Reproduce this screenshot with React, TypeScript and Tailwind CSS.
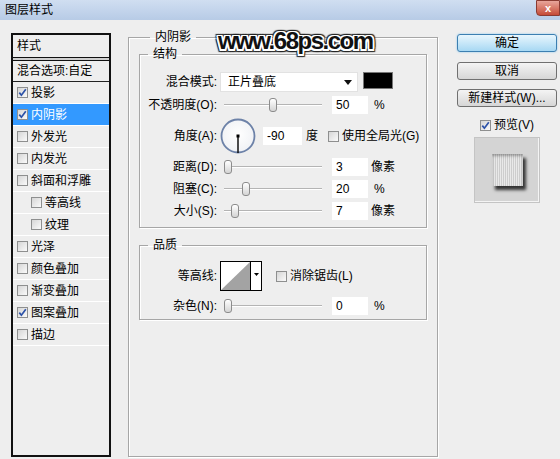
import React from 'react';

const font = "font-['Liberation_Sans','Noto_Sans_CJK_SC',sans-serif]";

const Check = ({ on }: { on?: boolean }) => (
    <span className="inline-flex w-[11px] h-[11px] shrink-0 items-center justify-center border border-[#8e8f8f] bg-gradient-to-br from-[#d6d6d6] to-[#fafafa]">
        {on && (
            <svg width="9" height="9" viewBox="0 0 9 9">
                <path d="M1.3 4.6 L3.4 7.2 L7.8 1.2" fill="none" stroke="#2c52a8" strokeWidth="1.7" />
            </svg>
        )}
    </span>
);

const Slider = ({ pct }: { pct: number }) => (
    <div className="relative w-[98px] h-[18px] shrink-0">
        <div className="absolute left-0 right-0 top-[8px] h-[2px] border-t border-[#b4b4b4] border-b border-b-white" />
        <div
            className="absolute top-[2px] w-[8px] h-[14px] rounded-[3px] border border-[#8c8c8c] bg-gradient-to-b from-white to-[#d4d4d4]"
            style={{ left: `${Math.round(pct * 0.9)}px` }}
        />
    </div>
);

const Field = ({ value, w = 'w-[36px]' }: { value: string; w?: string }) => (
    <div className={`${w} h-[18px] shrink-0 bg-white pl-[4px] leading-[18px]`}>{value}</div>
);

const Label = ({ children }: { children: React.ReactNode }) => (
    <div className="w-[77px] shrink-0 text-right">{children}</div>
);

const SliderRow = ({ label, pct, value, unit }: { label: string; pct: number; value: string; unit: string }) => (
    <div className="mt-[4px] h-[18px] flex items-center">
        <Label>{label}</Label>
        <div className="ml-[7px]">
            <Slider pct={pct} />
        </div>
        <div className="ml-[10px]">
            <Field value={value} />
        </div>
        <div className={unit === '%' ? 'ml-[6px]' : 'ml-[3px]'}>{unit}</div>
    </div>
);

const items: { name: string; on?: boolean; sub?: boolean; active?: boolean }[] = [
    { name: '投影', on: true },
    { name: '内阴影', on: true, active: true },
    { name: '外发光' },
    { name: '内发光' },
    { name: '斜面和浮雕' },
    { name: '等高线', sub: true },
    { name: '纹理', sub: true },
    { name: '光泽' },
    { name: '颜色叠加' },
    { name: '渐变叠加' },
    { name: '图案叠加', on: true },
    { name: '描边' },
];

export default function App() {
    return (
        <div className={`relative w-[560px] h-[459px] overflow-hidden bg-[#eeeeee] text-[12px] text-black ${font}`}>
            {/* title bar */}
            <div className="h-[20px] flex items-center justify-between bg-gradient-to-b from-[#d0def1] to-[#b7cbe6]">
                <span className="pl-[5px] text-[12px]">图层样式</span>
                <div className="self-start w-[24px] h-[16px] rounded-bl-[4px] border border-[#8a3b32] bg-gradient-to-b from-[#e7a59b] to-[#c54a36] flex items-center justify-center text-white text-[11px] font-bold leading-none">
                    x
                </div>
            </div>

            <div className="flex items-start">
                {/* styles list */}
                <div className="ml-[11px] mt-[13px] w-[100px] h-[424px] shrink-0 border-2 border-[#111] flex flex-col">
                    <div className="h-[22px] pl-[4px] flex items-center">样式</div>
                    <div className="h-[4px] border-y border-[#111] bg-[#cfcfcf]" />
                    <div className="h-[21px] pl-[4px] flex items-center border-b border-[#222]">混合选项:自定</div>
                    {items.map((it) => (
                        <div
                            key={it.name}
                            className={`h-[22px] flex items-center border-b border-white ${it.sub ? 'pl-[18px]' : 'pl-[4px]'} ${
                                it.active ? 'bg-[#3399ff] text-white' : ''
                            }`}
                        >
                            <Check on={it.on} />
                            <span className="ml-[3px]">{it.name}</span>
                        </div>
                    ))}
                </div>

                {/* main group */}
                <fieldset className="ml-[17px] mt-[9px] w-[310px] h-[428px] shrink-0 min-w-0 border border-[#a6a6a6] shadow-[inset_1px_1px_0_#fff,1px_1px_0_#fff] px-[10px]">
                    <legend className="ml-[11px] px-[5px] h-[16px] leading-[16px]">内阴影</legend>

                    <fieldset className="mt-[1px] w-[288px] min-w-0 border border-[#a6a6a6] shadow-[inset_1px_1px_0_#fff,1px_1px_0_#fff] pb-[7px]">
                        <legend className="ml-[8px] px-[5px] h-[16px] leading-[16px]">结构</legend>

                        <div className="mt-[10px] h-[20px] flex items-center">
                            <Label>混合模式:</Label>
                            <div className="ml-[3px] w-[138px] h-[20px] bg-white border border-[#e2e2e2] flex items-center justify-between pl-[7px] pr-[5px]">
                                <span>正片叠底</span>
                                <svg width="8" height="5" viewBox="0 0 8 5">
                                    <path d="M0 0 H8 L4 5 Z" fill="#111" />
                                </svg>
                            </div>
                            <div className="ml-[5px] self-start w-[30px] h-[17px] bg-black border border-[#777]" />
                        </div>

                        <SliderRow label="不透明度(O):" pct={50} value="50" unit="%" />

                        <div className="mt-[4px] h-[36px] flex items-center">
                            <Label>角度(A):</Label>
                            <svg className="ml-[3px] shrink-0" width="36" height="36" viewBox="0 0 36 36">
                                <defs>
                                    <radialGradient id="dial" cx="50%" cy="45%" r="60%">
                                        <stop offset="0%" stopColor="#ffffff" />
                                        <stop offset="100%" stopColor="#eef0f4" />
                                    </radialGradient>
                                </defs>
                                <circle cx="18" cy="18" r="16.5" fill="url(#dial)" stroke="#6d82a8" strokeWidth="1.8" />
                                <line x1="18" y1="18" x2="18" y2="35" stroke="#000" strokeWidth="1.4" />
                                <rect x="16.5" y="16.5" width="3" height="3" fill="#000" />
                            </svg>
                            <div className="ml-[7px]">
                                <Field value="-90" w="w-[39px]" />
                            </div>
                            <div className="ml-[4px]">度</div>
                            <div className="ml-[10px] flex items-center">
                                <Check />
                                <span className="ml-[3px]">使用全局光(G)</span>
                            </div>
                        </div>

                        <SliderRow label="距离(D):" pct={0} value="3" unit="像素" />
                        <SliderRow label="阻塞(C):" pct={20} value="20" unit="%" />
                        <SliderRow label="大小(S):" pct={8} value="7" unit="像素" />
                    </fieldset>

                    <fieldset className="mt-[9px] w-[288px] min-w-0 border border-[#a6a6a6] shadow-[inset_1px_1px_0_#fff,1px_1px_0_#fff] pb-[4px]">
                        <legend className="ml-[8px] px-[5px] h-[16px] leading-[16px]">品质</legend>

                        <div className="mt-[8px] h-[30px] flex items-center">
                            <Label>等高线:</Label>
                            <div className="ml-[3px] w-[42px] h-[30px] border border-black flex bg-white">
                                <svg width="29" height="28" viewBox="0 0 29 28">
                                    <path d="M0 28 L29 0 L29 28 Z" fill="#a3a3a3" />
                                </svg>
                                <div className="flex-1 border-l border-black flex justify-center pt-[11px]">
                                    <svg width="5" height="3" viewBox="0 0 5 3">
                                        <path d="M0 0 H5 L2.5 3 Z" fill="#000" />
                                    </svg>
                                </div>
                            </div>
                            <div className="ml-[14px] flex items-center">
                                <Check />
                                <span className="ml-[3px]">消除锯齿(L)</span>
                            </div>
                        </div>

                        <div className="mt-[6px] h-[18px] flex items-center">
                            <Label>杂色(N):</Label>
                            <div className="ml-[7px]">
                                <Slider pct={0} />
                            </div>
                            <div className="ml-[10px]">
                                <Field value="0" />
                            </div>
                            <div className="ml-[6px]">%</div>
                        </div>
                    </fieldset>
                </fieldset>

                {/* buttons */}
                <div className="ml-[19px] mt-[14px] w-[100px] shrink-0 flex flex-col items-center">
                    <button className="w-full h-[18px] rounded-[3px] border border-[#3c7fb1] bg-gradient-to-b from-[#e8f6fd] to-[#a7d8f3] shadow-[0_0_2px_#7fc4ef] leading-[16px]">
                        确定
                    </button>
                    <button className="mt-[10px] w-full h-[18px] rounded-[3px] border border-[#707070] bg-gradient-to-b from-[#f4f4f4] to-[#d6d6d6] leading-[16px]">
                        取消
                    </button>
                    <button className="mt-[9px] w-full h-[18px] rounded-[3px] border border-[#707070] bg-gradient-to-b from-[#f4f4f4] to-[#d6d6d6] leading-[16px]">
                        新建样式(W)...
                    </button>
                    <div className="mt-[12px] h-[12px] flex items-center">
                        <Check on />
                        <span className="ml-[3px]">预览(V)</span>
                    </div>
                    <div className="mt-[6px] w-[66px] h-[66px] bg-[#d4d4d4] border border-[#c4c4c4] shadow-[inset_-1px_-1px_0_#f4f4f4] flex items-center justify-center">
                        <div className="w-[31px] h-[32px] bg-[repeating-linear-gradient(90deg,#e9e9e9_0px,#e9e9e9_1px,#cdcdcd_1px,#cdcdcd_2px)] shadow-[inset_0_2px_3px_rgba(0,0,0,0.3),3px_4px_3px_rgba(0,0,0,0.75)]" />
                    </div>
                </div>
            </div>

            {/* watermark */}
            <div className="absolute left-[218px] top-[29px] text-[24px] leading-[24px] font-bold tracking-[-1.5px] text-[#111] font-['Liberation_Sans',sans-serif] [text-shadow:-1.5px_-1.5px_0_#fff,1.5px_-1.5px_0_#fff,-1.5px_1.5px_0_#fff,1.5px_1.5px_0_#fff,0_1.5px_0_#fff,0_-1.5px_0_#fff,1.5px_0_0_#fff,-1.5px_0_0_#fff,-2.5px_-2.5px_1px_#222,2.5px_-2.5px_1px_#222,-2.5px_2.5px_1px_#222,2.5px_2.5px_1px_#222,0_2.5px_1px_#222,0_-2.5px_1px_#222,2.5px_0_1px_#222,-2.5px_0_1px_#222]">
                www.68ps.com
            </div>
        </div>
    );
}
